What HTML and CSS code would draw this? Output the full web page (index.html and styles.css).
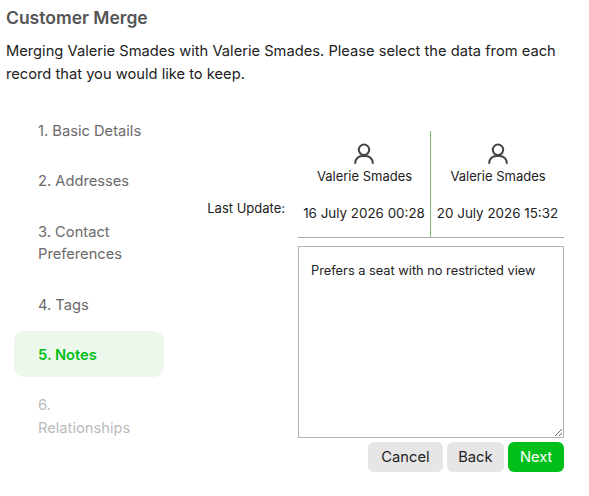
FILE: index.html
```html
<!DOCTYPE html>
<html lang="en">
<head>
    <meta charset="UTF-8">
    <title>Customer Merge</title>
    <link rel="stylesheet" href="styles.css">
</head>
<body>
    <h1 class="title">Customer Merge</h1>
    <p class="intro">Merging Valerie Smades with Valerie Smades. Please select the data from each record that you would like to keep.</p>

    <div class="merge">
        <ul class="steps">
            <li class="step">1. Basic Details</li>
            <li class="step">2. Addresses</li>
            <li class="step">3. Contact Preferences</li>
            <li class="step">4. Tags</li>
            <li class="step active">5. Notes</li>
            <li class="step disabled">6. Relationships</li>
        </ul>

        <div class="label-col">Last Update:</div>

        <div class="content">
            <div class="records">
                <div class="record">
                    <svg class="user" viewBox="0 0 22 22"><circle cx="11" cy="6.8" r="5.2"/><path d="M2.2 20.8v-.8a7 7 0 0 1 7-7h3.6a7 7 0 0 1 7 7v.8"/></svg>
                    <div class="name">Valerie Smades</div>
                    <div class="date">16 July 2026 00:28</div>
                </div>
                <div class="record second">
                    <svg class="user" viewBox="0 0 22 22"><circle cx="11" cy="6.8" r="5.2"/><path d="M2.2 20.8v-.8a7 7 0 0 1 7-7h3.6a7 7 0 0 1 7 7v.8"/></svg>
                    <div class="name">Valerie Smades</div>
                    <div class="date">20 July 2026 15:32</div>
                </div>
            </div>
            <textarea class="notes">Prefers a seat with no restricted view</textarea>
            <div class="actions">
                <button class="btn cancel">Cancel</button>
                <button class="btn">Back</button>
                <button class="btn primary">Next</button>
            </div>
        </div>
    </div>
</body>
</html>
```

FILE: styles.css
```css
body {
    margin: 0;
    padding: 7px 6px 0;
    font-family: Inter, "Liberation Sans", sans-serif;
    font-size: 16px;
    line-height: 22.4px;
    color: #222;
    background-color: #fff;
}
.title {
    margin: 0;
    font-size: 17.5px;
    line-height: 22.4px;
    font-weight: 600;
    color: #555;
}
.intro {
    margin: 11px 0 0;
    font-size: 14.7px;
    line-height: 23px;
}
.merge {
    display: flex;
    margin-top: 20.5px;
}
.steps {
    flex: none;
    width: 150px;
    margin: 0 0 0 8px;
    padding: 0;
    list-style: none;
    display: flex;
    flex-direction: column;
    gap: 4px;
}
.step {
    padding: 13px 20px 11px 24px;
    border-radius: 10px;
    font-size: 14.7px;
    color: #6a6a6a;
}
.step.active {
    background-color: #edf7ec;
    color: #00bf1a;
    font-weight: 600;
}
.step.disabled {
    color: #bbb;
}
.label-col {
    flex: none;
    width: 121px;
    padding-top: 92px;
    font-size: 13px;
    line-height: 18px;
    text-align: right;
}
.content {
    flex: none;
    width: 266px;
    margin-left: 13px;
    padding-top: 24px;
}
.records {
    display: flex;
    height: 106px;
    border-bottom: 1px solid #aaa;
}
.record {
    width: 132px;
    display: flex;
    flex-direction: column;
    align-items: center;
    padding-top: 12px;
    font-size: 13px;
}
.record.second {
    width: 133px;
    border-left: 1px solid #7dbb6f;
}
.user {
    width: 22px;
    height: 22px;
    fill: none;
    stroke: #444;
    stroke-width: 2;
}
.name {
    padding-left: 1px;
}
.date {
    margin-top: 15px;
    font-size: 13.4px;
}
.notes {
    display: block;
    box-sizing: border-box;
    width: 266px;
    height: 192px;
    margin-top: 8px;
    padding: 16px 12px;
    border: 1px solid #b5b5b5;
    font-family: inherit;
    font-size: 12.8px;
    color: #222;
    outline: none;
}
.actions {
    display: flex;
    justify-content: flex-end;
    gap: 4px;
    margin-top: 4px;
}
.btn {
    height: 30px;
    padding: 1px 11.7px 0;
    border: none;
    border-radius: 6px;
    background-color: #e6e6e6;
    font-family: inherit;
    font-size: 14.7px;
    color: #222;
}
.btn.cancel {
    padding: 1px 13px 0;
}
.btn.primary {
    background-color: #00bf1a;
    color: #fff;
}
```
